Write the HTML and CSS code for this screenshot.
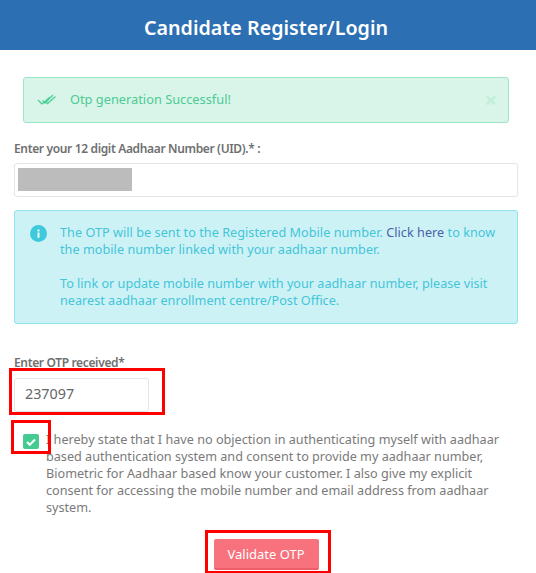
FILE: index.html
```html
<!DOCTYPE html>
<html lang="en">
<head>
<meta charset="UTF-8" />
<title>Candidate Register/Login</title>
<link rel="stylesheet" href="styles.css">
</head>
<body>
  <header class="title-bar">
    <h1>Candidate Register/Login</h1>
  </header>
  <main class="content">
    <div class="alert-success">
      <svg class="alert-icon" viewBox="0 0 20 12" width="20" height="12" aria-hidden="true">
        <path d="M1 6l4 4 M5 10l8-7 M5.500 6.500l2.500 2.500 8-8 M9.500 8.500l1 1 8-7" fill="none" stroke="#4fd09a" stroke-width="1.300"/>
      </svg>
      <span class="alert-text">Otp generation Successful!</span>
      <span class="alert-close">&times;</span>
    </div>

    <label class="field-label">Enter your 12 digit Aadhaar Number (UID).* :</label>
    <div class="text-input uid-input"><span class="masked"></span></div>

    <div class="alert-info">
      <svg class="info-icon" viewBox="0 0 18 18" width="17" height="17" aria-hidden="true">
        <circle cx="9" cy="9" r="9" fill="#3fcadc"/>
        <rect x="8" y="8" width="2" height="5.500" fill="#fff"/>
        <rect x="8" y="4.800" width="2" height="2" fill="#fff"/>
      </svg>
      <div class="info-text">
        <p class="info-lead">The OTP will be sent to the Registered Mobile number. <a href="#">Click here</a> to know the mobile number linked with your aadhaar number.</p>
        <p>To link or update mobile number with your aadhaar number, please visit nearest aadhaar enrollment centre/Post Office.</p>
      </div>
    </div>

    <label class="field-label otp-label">Enter OTP received*</label>
    <div class="otp-mark">
      <div class="text-input otp-input">237097</div>
    </div>

    <div class="consent">
      <span class="check-mark">
        <span class="check-box">
          <svg viewBox="0 0 10 8" width="10" height="8" aria-hidden="true"><path d="M1 4l2.800 2.800L9 1.500" fill="none" stroke="#fff" stroke-width="2"/></svg>
        </span>
      </span>
      <p>I hereby state that I have no objection in authenticating myself with aadhaar based authentication system and consent to provide my aadhaar number, Biometric for Aadhaar based know your customer. I also give my explicit consent for accessing the mobile number and email address from aadhaar system.</p>
    </div>

    <div class="actions">
      <div class="btn-mark"><button class="btn-validate">Validate OTP</button></div>
    </div>
  </main>
</body>
</html>
```

FILE: styles.css
```css
* {
  box-sizing: border-box;
}
html, body {
  margin: 0;
  padding: 0;
}
body {
  width: 536px;
  height: 573px;
  overflow: hidden;
  background: #fff;
  font-family: "Noto Sans", "Open Sans", sans-serif;
  font-size: 12.650px;
  color: #74788d;
}
.title-bar {
  height: 50px;
  padding-right: 4px;
  background: #2c6fb3;
  display: flex;
  align-items: center;
  justify-content: center;
}
h1 {
  margin: 5px 0 0;
  color: #fff;
  font-size: 19.700px;
  font-weight: 600;
}
.content {
  padding: 27px 18px 0 14px;
}
.alert-success {
  margin: 0 9px;
  height: 46px;
  display: flex;
  align-items: center;
  padding: 0 11px 2px 13px;
  background: #d9f5e9;
  border: 1px solid #9be4c5;
  border-radius: 3px;
  color: #4ccb94;
  font-size: 12.800px;
}
.alert-icon {
  flex: none;
  margin: 2px 13px 0 0;
}
.alert-text {
  flex: 1;
}
.alert-close {
  color: #c2eeda;
  font-size: 22px;
  line-height: 1;
  font-weight: 700;
}
.field-label {
  display: block;
  margin-top: 18px;
  font-size: 12px;
  letter-spacing: -0.350px;
  font-weight: 600;
  line-height: 16px;
  color: #6f6f6f;
}
.text-input {
  height: 34px;
  border: 1px solid #e5e5e5;
  border-radius: 3px;
  background: #fff;
}
.uid-input {
  margin-top: 6px;
  padding: 4px 3px;
}
.masked {
  display: block;
  width: 114px;
  height: 23px;
  background: #bcbcbc;
}
.alert-info {
  margin-top: 13px;
  height: 114px;
  display: flex;
  padding: 13px 15px;
  background: #cdf2f6;
  border: 1px solid #8fe3ed;
  border-radius: 3px;
  color: #44c5d8;
  line-height: 17px;
}
.info-icon {
  flex: none;
  margin: 1px 13px 0 0;
}
.info-text p {
  margin: 0 0 17px;
}
.info-lead {
  letter-spacing: 0.040px;
}
.info-text a {
  color: #4a5fa8;
  text-decoration: none;
}
.otp-label {
  margin-top: 31px;
}
.otp-mark {
  position: relative;
  margin-top: 7px;
}
.otp-mark::after,
.check-mark::after,
.btn-mark::after {
  content: "";
  box-sizing: border-box;
  position: absolute;
  border: 3px solid #f00;
  pointer-events: none;
}
.otp-mark::after {
  left: -5px;
  top: -10px;
  width: 156px;
  height: 47px;
}
.otp-input {
  width: 135px;
  padding: 0 10px;
  line-height: 29px;
  font-size: 14.300px;
  color: #666;
}
.consent {
  margin-top: 19px;
  display: flex;
  line-height: 17px;
  color: #7a7a7a;
}
.consent p {
  margin: 0;
}
.check-mark {
  position: relative;
  flex: none;
  width: 32px;
  height: 17px;
  padding-left: 9px;
}
.check-mark::after {
  left: -3px;
  top: -11px;
  width: 40px;
  height: 34px;
}
.check-box {
  display: flex;
  align-items: center;
  justify-content: center;
  width: 16px;
  height: 15px;
  margin-top: 3px;
  border-radius: 2px;
  background: #45cb92;
}
.actions {
  margin-top: 23px;
  display: flex;
  justify-content: center;
}
.btn-mark {
  position: relative;
}
.btn-mark::after {
  left: -9px;
  top: -9px;
  width: 126px;
  height: 44px;
}
.btn-validate {
  display: block;
  width: 105px;
  height: 31px;
  padding: 0;
  border: 0;
  border-bottom: 2px solid #ee5d6c;
  border-radius: 2px;
  background: #f8727e;
  color: #fff;
  font: 13px "Noto Sans", "Open Sans", sans-serif;
}
```
